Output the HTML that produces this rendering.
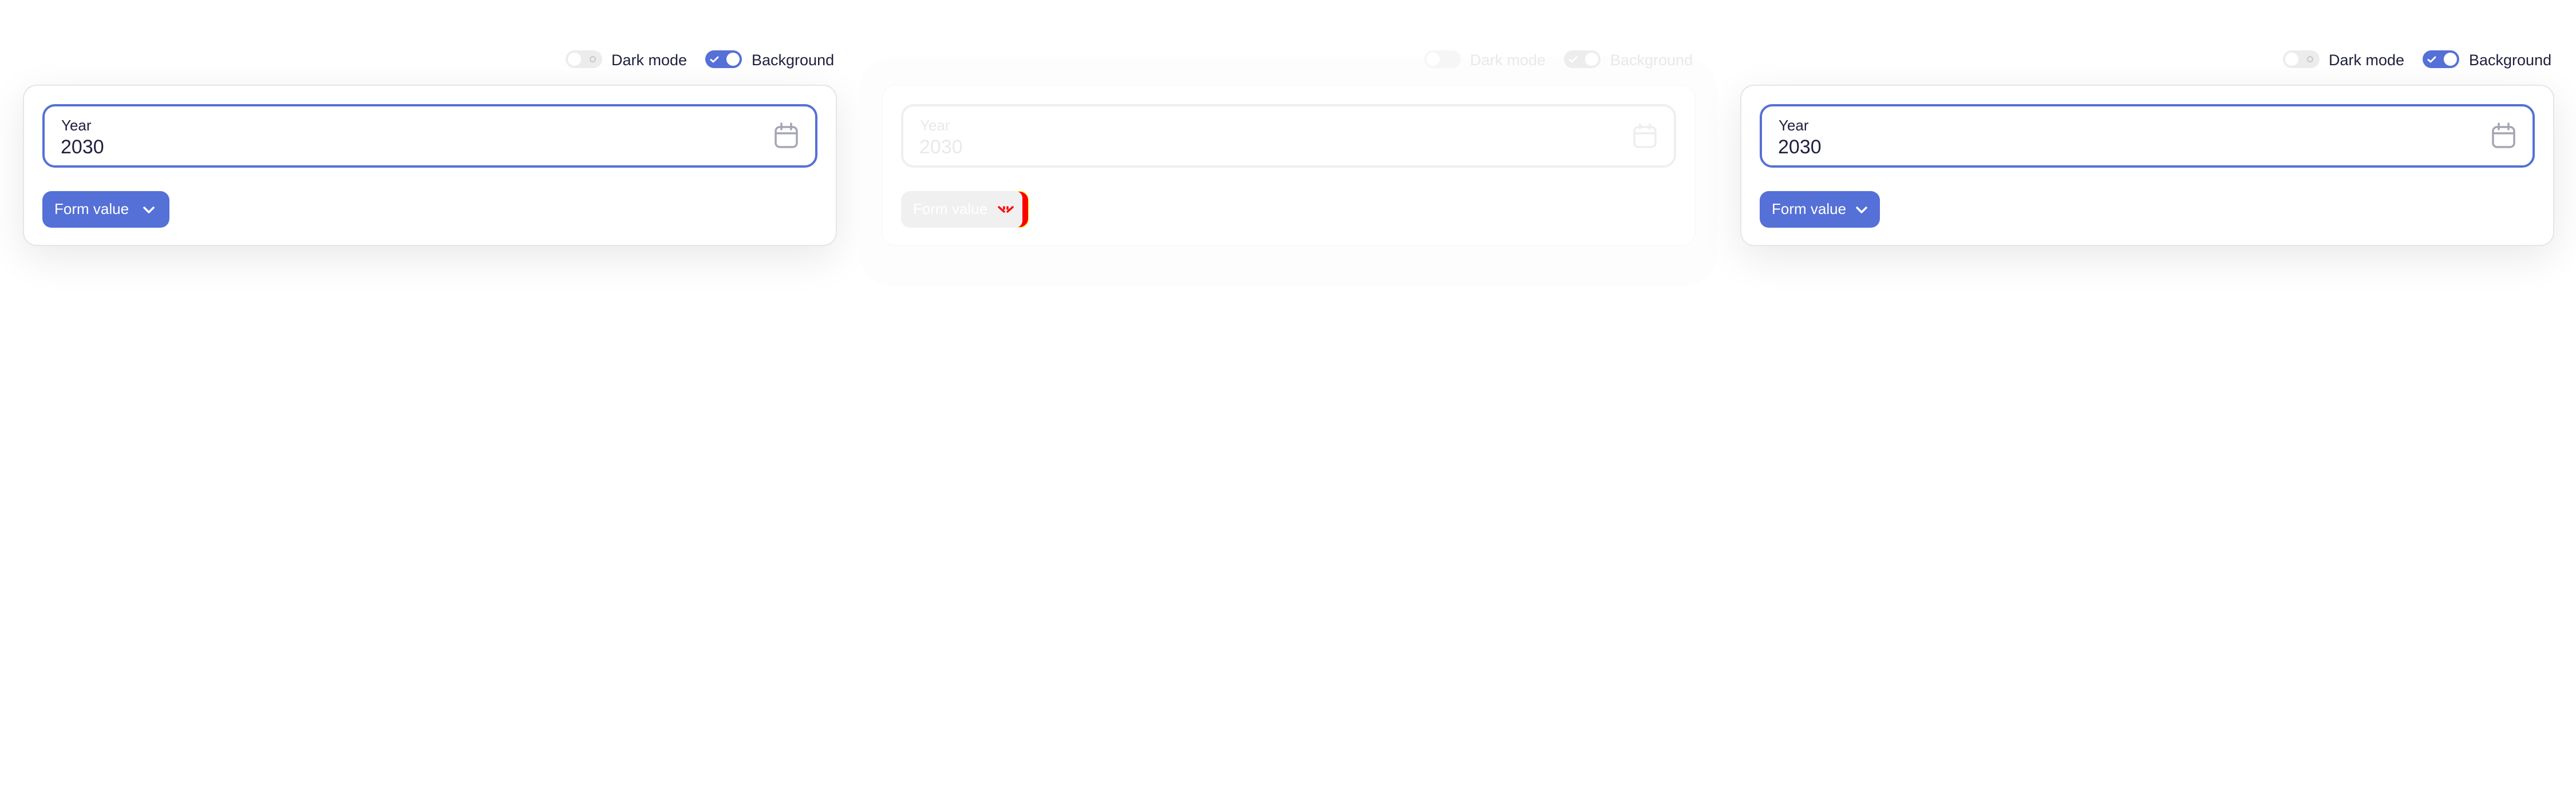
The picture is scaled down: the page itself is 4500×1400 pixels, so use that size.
<!DOCTYPE html>
<html><head><meta charset="utf-8"><style>
*{margin:0;padding:0;box-sizing:border-box}
body{width:4500px;height:1400px;background:#fff;position:relative;overflow:hidden;font-family:"Liberation Sans",sans-serif}
.p{position:absolute;top:0;width:1500px;height:520px}
.glow{position:absolute;left:40px;top:148px;width:1422px;height:282px;border-radius:24px;box-shadow:0 20px 70px rgba(0,0,0,0.09)}
.tg{position:absolute;top:88px;width:64px;height:31px;border-radius:16px}
.tg .k{position:absolute;top:4px;width:23px;height:23px;border-radius:50%;background:#fff}
.lbl{position:absolute;top:87px;font-size:27px;line-height:36px;color:#1f1f3d}
.card{position:absolute;left:40px;top:148px;width:1422px;height:282px;border:2px solid #e6e6e6;border-radius:24px;background:#fff}
.inp{position:absolute;left:74px;top:182px;width:1354px;height:111px;border:4px solid #5570d6;border-radius:22px;background:#fff}
.yr{position:absolute;left:107px;top:204px;font-size:26px;color:#1f1f3d}
.val{position:absolute;left:106px;top:238px;font-size:34px;color:#1f1f3d}
.btn{position:absolute;left:74px;top:334px;width:222px;height:64px;border-radius:16px;background:#5570d6}
.bt{position:absolute;left:95px;top:350px;font-size:26px;color:#fff}
.f .lbl,.f .yr,.f .val{color:#e9e9e9}
</style></head><body>

<div class="p" style="left:0">
 <div class="glow"></div>
 <div class="tg" style="left:988px;background:#ececec"><div class="k" style="left:4px"></div><div style="position:absolute;left:42px;top:10px;width:11px;height:11px;border-radius:50%;border:2px solid #c8c8c8"></div></div>
 <div class="lbl" style="left:1068px">Dark mode</div>
 <div class="tg" style="left:1232px;background:#5570d6"><svg style="position:absolute;left:8px;top:8px" width="16" height="16" viewBox="0 0 16 16"><path d="M2 8.5l4 3.5 8-8" stroke="#fff" stroke-width="3" fill="none" stroke-linecap="round" stroke-linejoin="round"/></svg><div class="k" style="left:37px"></div></div>
 <div class="lbl" style="left:1313px">Background</div>
 <div class="card"></div>
 <div class="inp"></div>
 <div class="yr">Year</div>
 <div class="val">2030</div>
 <svg style="position:absolute;left:1352px;top:214px" width="44" height="46" viewBox="0 0 44 46"><rect x="3" y="8" width="37" height="35" rx="7" fill="none" stroke="#a4a6b2" stroke-width="3.5"/><path d="M3 19h37M13 2v10M30 2v10" stroke="#a4a6b2" stroke-width="3.5" stroke-linecap="round"/></svg>
 <div class="btn"></div>
 <div class="bt">Form value</div>
 <svg style="position:absolute;left:249px;top:360px" width="22" height="14" viewBox="0 0 22 14"><path d="M3 3l8 8 8-8" stroke="#fff" stroke-width="3.5" fill="none" stroke-linecap="round" stroke-linejoin="round"/></svg>
</div>

<div class="p f" style="left:1500px">
 <div style="position:absolute;left:0;top:100px;width:1500px;height:400px;border-radius:60px;background:#fdfdfd"></div>
 <div class="tg" style="left:988px;background:#f6f6f6"><div class="k" style="left:4px"></div></div>
 <div class="lbl" style="left:1068px">Dark mode</div>
 <div class="tg" style="left:1232px;background:#ededed"><svg style="position:absolute;left:8px;top:8px" width="16" height="16" viewBox="0 0 16 16"><path d="M2 8.5l4 3.5 8-8" stroke="#fff" stroke-width="3" fill="none" stroke-linecap="round"/></svg><div class="k" style="left:37px"></div></div>
 <div class="lbl" style="left:1313px">Background</div>
 <div class="card" style="border-color:#fafafa"></div>
 <div class="inp" style="border-color:#efefef"></div>
 <div class="yr">Year</div>
 <div class="val">2030</div>
 <svg style="position:absolute;left:1352px;top:214px" width="44" height="46" viewBox="0 0 44 46"><rect x="3" y="8" width="37" height="35" rx="7" fill="none" stroke="#eeeeee" stroke-width="3.5"/><path d="M3 19h37M13 2v10M30 2v10" stroke="#eeeeee" stroke-width="3.5"/></svg>
 <div style="position:absolute;left:260px;top:334px;width:37px;height:64px;border-radius:0 16px 16px 0;background:#ff0000;border:1px solid #ff0"></div>
 <div class="btn" style="background:#f0f0f0;width:212px;border-radius:16px 12px 12px 16px"></div>
 <div class="bt">Form value</div>
 <svg style="position:absolute;left:242px;top:359px" width="30" height="14" viewBox="0 0 30 14"><path d="M3 3l9 8M27 3l-9 8M12 3v3M18 3v3" stroke="#ff0000" stroke-width="3.5" fill="none" stroke-linecap="round"/></svg>
</div>

<div class="p" style="left:3000px">
 <div class="glow"></div>
 <div class="tg" style="left:988px;background:#ececec"><div class="k" style="left:4px"></div><div style="position:absolute;left:42px;top:10px;width:11px;height:11px;border-radius:50%;border:2px solid #c8c8c8"></div></div>
 <div class="lbl" style="left:1068px">Dark mode</div>
 <div class="tg" style="left:1232px;background:#5570d6"><svg style="position:absolute;left:8px;top:8px" width="16" height="16" viewBox="0 0 16 16"><path d="M2 8.5l4 3.5 8-8" stroke="#fff" stroke-width="3" fill="none" stroke-linecap="round" stroke-linejoin="round"/></svg><div class="k" style="left:37px"></div></div>
 <div class="lbl" style="left:1313px">Background</div>
 <div class="card"></div>
 <div class="inp"></div>
 <div class="yr">Year</div>
 <div class="val">2030</div>
 <svg style="position:absolute;left:1352px;top:214px" width="44" height="46" viewBox="0 0 44 46"><rect x="3" y="8" width="37" height="35" rx="7" fill="none" stroke="#a4a6b2" stroke-width="3.5"/><path d="M3 19h37M13 2v10M30 2v10" stroke="#a4a6b2" stroke-width="3.5" stroke-linecap="round"/></svg>
 <div class="btn" style="width:210px"></div>
 <div class="bt">Form value</div>
 <svg style="position:absolute;left:241px;top:360px" width="22" height="14" viewBox="0 0 22 14"><path d="M3 3l8 8 8-8" stroke="#fff" stroke-width="3.5" fill="none" stroke-linecap="round" stroke-linejoin="round"/></svg>
</div>
</body></html>
